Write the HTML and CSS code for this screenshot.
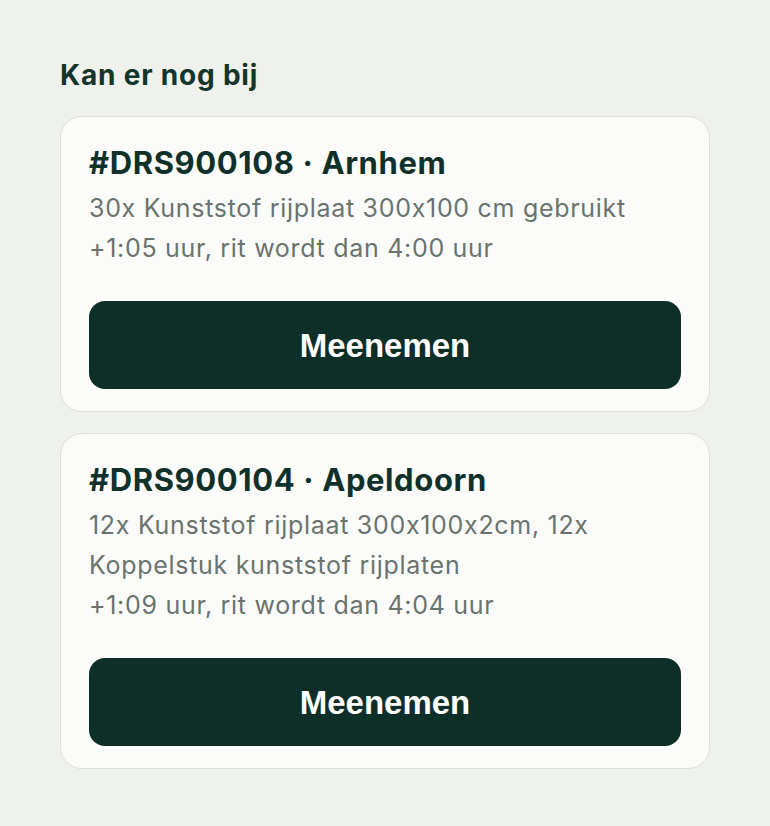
FILE: index.html
```html
<!DOCTYPE html>
<html lang="nl">
<head>
    <meta charset="UTF-8">
    <meta name="viewport" content="width=device-width, initial-scale=1.0">
    <title>Kan er nog bij</title>
    <link rel="stylesheet" href="styles.css">
</head>
<body>
    <section class="extra">
        <h2>Kan er nog bij</h2>

        <div class="order-card">
            <h3>#DRS900108 · Arnhem</h3>
            <p class="items">30x Kunststof rijplaat 300x100 cm gebruikt</p>
            <p class="time">+1:05 uur, rit wordt dan 4:00 uur</p>
            <button class="btn">Meenemen</button>
        </div>

        <div class="order-card">
            <h3>#DRS900104 · Apeldoorn</h3>
            <p class="items">12x Kunststof rijplaat 300x100x2cm, 12x Koppelstuk kunststof rijplaten</p>
            <p class="time">+1:09 uur, rit wordt dan 4:04 uur</p>
            <button class="btn">Meenemen</button>
        </div>
    </section>
</body>
</html>
```

FILE: styles.css
```css
body {
    margin: 0;
    padding: 59px 60px;
    background: #eff1ed;
    font-family: Inter, "Noto Sans", sans-serif;
    font-feature-settings: "calt" 0;
    color: #13352b;
}
.extra h2 {
    margin: 0 0 25px;
    font-size: 28px;
    line-height: 32px;
    font-weight: 700;
    letter-spacing: 0.8px;
}
.order-card {
    background: #fbfcfa;
    border: 1px solid #dcdfdb;
    border-radius: 22px;
    padding: 28px 28px 22px;
    margin-bottom: 21px;
}
.order-card h3 {
    margin: 0 0 7px;
    font-size: 31px;
    line-height: 36px;
    font-weight: 700;
    letter-spacing: 0.6px;
    color: #10302a;
}
.order-card p {
    margin: 0;
    font-size: 25px;
    line-height: 40px;
    letter-spacing: 0.7px;
    color: #6a736e;
}
.btn {
    display: block;
    width: 100%;
    height: 88px;
    margin-top: 33px;
    padding-top: 2px;
    background: #0e2f28;
    color: #fff;
    border: none;
    border-radius: 16px;
    font-family: "Liberation Sans", Arial, sans-serif;
    font-size: 33px;
    font-weight: 700;
    letter-spacing: 0;
    cursor: pointer;
}
```
